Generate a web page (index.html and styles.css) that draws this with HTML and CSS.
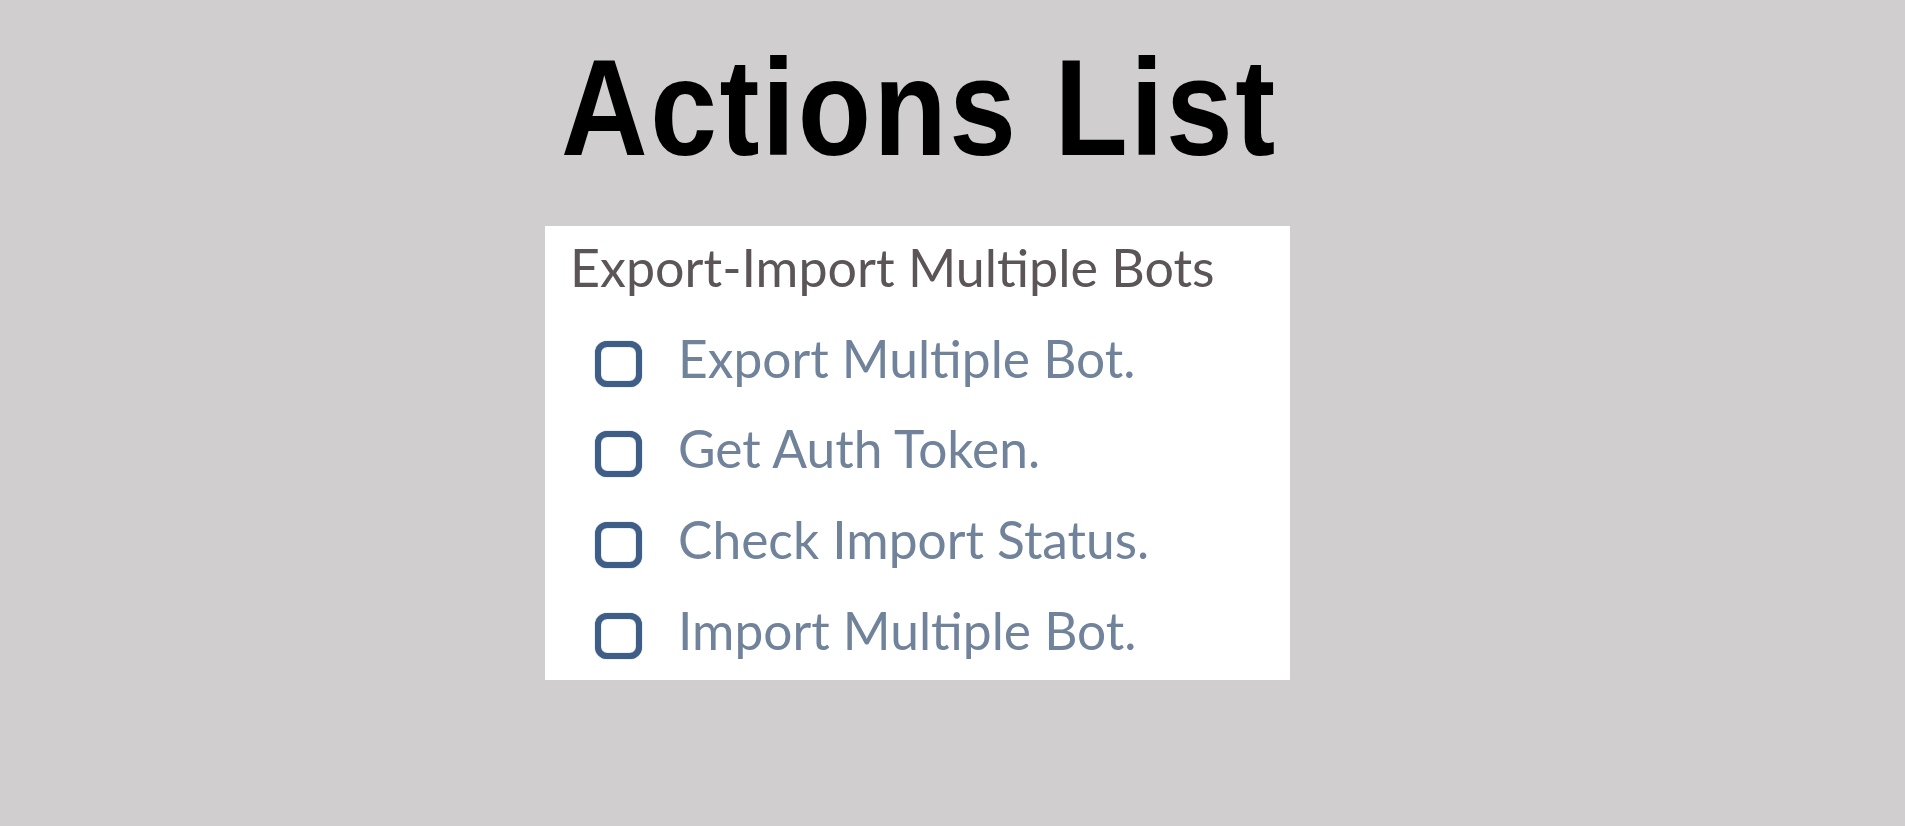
FILE: index.html
```html
<!DOCTYPE html>
<html lang="en">
<head>
<meta charset="utf-8">
<title>Actions List</title>
<link rel="stylesheet" href="styles.css">
</head>
<body>
<main class="page">
  <h1 class="title">Actions List</h1>
  <section class="card">
    <h2 class="card-heading">Export-Import Multiple Bots</h2>
    <ul class="actions">
      <li class="action"><span class="check"></span><span class="label">Export Multiple Bot.</span></li>
      <li class="action"><span class="check"></span><span class="label">Get Auth Token.</span></li>
      <li class="action"><span class="check"></span><span class="label">Check Import Status.</span></li>
      <li class="action"><span class="check"></span><span class="label">Import Multiple Bot.</span></li>
    </ul>
  </section>
</main>
</body>
</html>
```

FILE: styles.css
```css
html, body {
  margin: 0;
  padding: 0;
  background: #d0cecf;
}

body {
  font-family: "Liberation Sans", Arial, sans-serif;
}

.page {
  width: 745px;
  margin-left: 545px;
  padding-top: 46.6px;
}

.title {
  margin: 0;
  padding-left: 16px;
  font-family: "Liberation Sans", Arial, sans-serif;
  font-weight: 700;
  font-size: 120px;
  line-height: 120px;
  letter-spacing: 2.5px;
  color: #000;
  white-space: nowrap;
  transform: scaleY(1.14);
}

.card {
  margin-top: 59.4px;
  background: #ffffff;
  height: 454px;
  box-sizing: border-box;
  padding: 9px 0 0 25px;
  display: flex;
  flex-direction: column;
  gap: 26.7px;
}

.card-heading {
  margin: 0;
  font-family: Lato, "Open Sans", sans-serif;
  font-weight: 400;
  font-size: 52px;
  line-height: 64px;
  color: #5c5558;
  white-space: nowrap;
}

.actions {
  list-style: none;
  margin: 0;
  padding: 0 0 0 25px;
  display: flex;
  flex-direction: column;
  gap: 26.7px;
}

.action {
  display: flex;
  align-items: flex-start;
  gap: 36px;
  height: 64px;
}

.check {
  flex: none;
  width: 47px;
  height: 46px;
  margin-top: 15px;
  box-sizing: border-box;
  border: 6px solid #3f5e87;
  border-radius: 12px;
  background: #fff;
  box-shadow: 0 0 1px #3f5e87, inset 0 0 1px #3f5e87;
}

.label {
  font-family: Lato, "Open Sans", sans-serif;
  font-size: 51.5px;
  line-height: 64px;
  color: #70839a;
  white-space: nowrap;
}
```
